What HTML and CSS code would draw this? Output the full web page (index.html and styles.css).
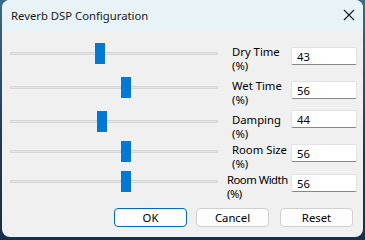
FILE: index.html
```html
<!DOCTYPE html>
<html lang="en">
<head>
    <meta charset="UTF-8">
    <meta name="viewport" content="width=device-width, initial-scale=1.0">
    <title>Reverb DSP Configuration</title>
    <link rel="stylesheet" href="styles.css">
</head>
<body>
    <div class="window">
        <div class="titlebar">
            <span class="title">Reverb DSP Configuration</span>
            <svg class="close" width="12" height="12" viewBox="0 0 12 12">
                <path d="M1 1 L11 11 M11 1 L1 11" stroke="#1a1a1a" stroke-width="1.1" fill="none"/>
            </svg>
        </div>
        <div class="client">
            <div class="rows">
                <div class="row">
                    <div class="slider"><div class="track"></div><div class="thumb" style="left: 85px"></div></div>
                    <label class="label">Dry Time<br>(%)</label>
                    <input class="field" type="text" value="43">
                </div>
                <div class="row">
                    <div class="slider"><div class="track"></div><div class="thumb" style="left: 111px"></div></div>
                    <label class="label">Wet Time<br>(%)</label>
                    <input class="field" type="text" value="56">
                </div>
                <div class="row row-short">
                    <div class="slider"><div class="track"></div><div class="thumb" style="left: 87px"></div></div>
                    <label class="label">Damping<br>(%)</label>
                    <input class="field field-up" type="text" value="44">
                </div>
                <div class="row row-short">
                    <div class="slider"><div class="track"></div><div class="thumb" style="left: 111px"></div></div>
                    <label class="label">Room Size<br>(%)</label>
                    <input class="field field-mid" type="text" value="56">
                </div>
                <div class="row row-last">
                    <div class="slider"><div class="track"></div><div class="thumb" style="left: 111px"></div></div>
                    <label class="label label-wide">Room Width<br>(%)</label>
                    <input class="field field-mid" type="text" value="56">
                </div>
            </div>
            <div class="buttons">
                <button class="btn btn-default">OK</button>
                <button class="btn">Cancel</button>
                <button class="btn btn-reset">Reset</button>
            </div>
        </div>
    </div>
</body>
</html>
```

FILE: styles.css
```css
body {
    margin: 0;
    width: 365px;
    height: 240px;
    overflow: hidden;
    background: linear-gradient(180deg, #3b6a86 0%, #1c3a58 60%, #16304a 100%);
    font-family: "Noto Sans", "Open Sans", sans-serif;
    font-size: 11.3px;
    color: #000;
}
.window {
    margin: 0 2px;
    height: 237px;
    background: #f0f0f0;
    border-radius: 8px;
    overflow: hidden;
    display: flex;
    flex-direction: column;
}
.titlebar {
    height: 31px;
    flex: none;
    background: #e8f3f7;
    display: flex;
    align-items: center;
    justify-content: space-between;
    padding: 0 9px 0 9px;
}
.title {
    font-size: 11.3px;
    color: #1a1a1a;
    margin-top: -1px;
}
.close {
    margin-top: -1px;
    margin-right: -1px;
}
.client {
    flex: 1;
    padding: 12px 0 0 8px;
}
.row {
    display: flex;
    align-items: flex-start;
    height: 34px;
}
.row-short {
    height: 30px;
}
.row-last {
    height: 21px;
}
.slider {
    position: relative;
    width: 208px;
    height: 21px;
    flex: none;
}
.track {
    position: absolute;
    left: 0;
    right: 0;
    top: 9px;
    height: 1px;
    background: #e7e7e7;
    border: 1px solid #d6d6d6;
}
.thumb {
    position: absolute;
    top: 0;
    width: 10px;
    height: 21px;
    background: #0078d4;
}
.label {
    width: 59px;
    margin-left: 14px;
    margin-top: 2px;
    line-height: 14px;
    white-space: nowrap;
    flex: none;
}
.label-wide {
    margin-left: 9px;
    width: 64px;
    letter-spacing: -0.5px;
}
.field {
    width: 66px;
    height: 18px;
    margin-top: 4px;
    box-sizing: border-box;
    border: 1px solid #e2e2e2;
    border-bottom-color: #868686;
    border-radius: 2px;
    background: #fff;
    padding: 0 0 0 5px;
    font-family: inherit;
    font-size: 11.3px;
    color: #000;
    outline: none;
}
.field-up {
    margin-top: -1px;
}
.field-mid {
    margin-top: 3px;
}
.buttons {
    display: flex;
    justify-content: flex-end;
    gap: 9px;
    margin-top: 16px;
    padding-right: 10px;
}
.btn {
    width: 73px;
    height: 19px;
    box-sizing: border-box;
    border: 1px solid #d0d0d0;
    border-radius: 4px;
    background: #fdfdfd;
    font-family: inherit;
    font-size: 11.3px;
    color: #000;
    padding: 0;
    line-height: 16px;
}
.btn-default {
    border-color: #0067c0;
}
.btn-reset {
    margin-left: 2px;
}
```
